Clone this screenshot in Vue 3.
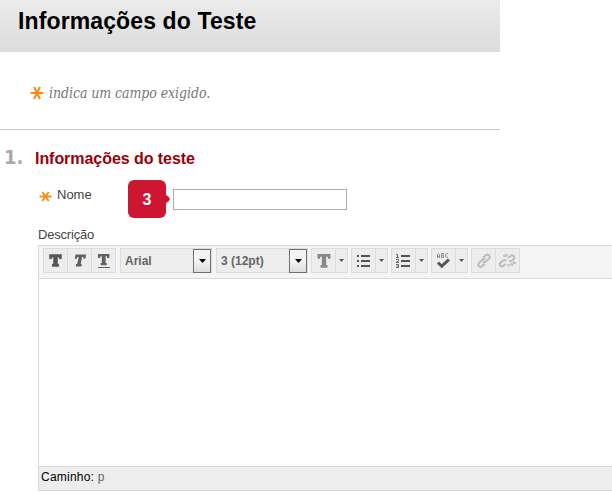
<script setup>
const styleButtons = ['bold', 'italic', 'underline']
const selects = [
  { label: 'Arial', width: 92 },
  { label: '3 (12pt)', width: 92 },
]
const menus = ['color', 'bullets', 'numbers', 'spell']
const slab = 'M0 0H12V4.2H9.6V2.4H8V9.6H9.2V12H2.8V9.6H4V2.4H2.4V4.2H0Z'
</script>

<template>
  <main class="page">
    <header class="title-bar"><h1>Informações do Teste</h1></header>

    <div class="required-note">
      <svg class="star" viewBox="0 0 14 14"><path d="M0.5 7H13.5M4 1L10 13M10 1L4 13" /></svg>
      <em>indica um campo exigido.</em>
    </div>

    <div class="section-heading">
      <span class="number">1.</span>
      <h2>Informações do teste</h2>
    </div>

    <div class="name-row">
      <svg class="star" viewBox="0 0 14 12"><path d="M0.5 6H13.5M3.5 1L10.5 11M10.5 1L3.5 11" /></svg>
      <label for="name">Nome</label>
      <div class="callout">3</div>
      <input id="name" type="text" />
    </div>

    <div class="description-label">Descrição</div>

    <section class="editor">
      <div class="toolbar">
        <div class="group">
          <button v-for="kind in styleButtons" :key="kind" type="button" class="cell">
            <svg viewBox="0 0 24 24" class="icon">
              <path v-if="kind === 'bold'" :d="slab" transform="translate(5.5 5.5)" fill="#555" stroke="#555" stroke-width=".5" />
              <path v-else-if="kind === 'italic'" :d="slab" transform="matrix(.88 0 -.2 1 7.6 5.5)" fill="#606060" />
              <g v-else fill="#606060">
                <path :d="slab" transform="translate(6 5) scale(.95 .93)" />
                <path d="M6 18H18V19H6Z" />
              </g>
            </svg>
          </button>
        </div>

        <div v-for="s in selects" :key="s.label" class="select" :style="{ width: s.width + 'px' }">
          <span>{{ s.label }}</span>
          <i class="drop"><svg viewBox="0 0 7 4"><path d="M0 0H7L3.5 4Z" /></svg></i>
        </div>

        <div v-for="kind in menus" :key="kind" class="group">
          <button type="button" class="cell">
            <svg viewBox="0 0 24 24" class="icon">
              <path v-if="kind === 'color'" :d="slab" transform="translate(5.5 5) scale(1.08 1.15)" fill="#888" />
              <g v-else-if="kind === 'bullets'" fill="#555">
                <path d="M5 6H7V8H5ZM5 11H7V13H5ZM5 16H7V18H5ZM9 6H18V8H9ZM9 11H18V13H9ZM9 16H18V18H9Z" />
              </g>
              <g v-else-if="kind === 'numbers'" fill="#555">
                <path d="M9 6H18V8H9ZM9 11H18V13H9ZM9 16H18V18H9Z" />
                <path d="M4 5.5H5.5V8.5M4 8.5H7M4 10.5H6.5V12L4 13.5H7M4 15.5H6.5V18.5H4M4.5 17H6" fill="none" stroke="#666" />
              </g>
              <g v-else>
                <path d="M5.5 9V5.5L6.5 4.5L7.5 5.5V9M5.5 7.5H7.5M9.5 4.5V8.5H11.5V7L10.5 6.5L11.5 6V4.5H9.5M16 5L15 4.5L13.5 5.5V7.5L15 8.5L16 8" fill="none" stroke="#777" stroke-width=".8" />
                <path d="M6 13.5L9.8 17.2L17 10.5" fill="none" stroke="#555" stroke-width="3" />
              </g>
            </svg>
          </button>
          <button type="button" class="cell arrow">
            <svg viewBox="0 0 5 3"><path d="M0 0H5L2.5 3Z" /></svg>
          </button>
        </div>

        <div class="group">
          <button type="button" class="cell">
            <svg viewBox="0 0 24 24" class="icon link">
              <path d="M11 9L14 6Q15.5 5 17 6.5Q18.5 8 17 9.7L14 12.5Q12.5 13.7 11 12.5M13 11Q11.5 9.8 10 11L7 14Q5.5 15.7 7 17.3Q8.5 18.5 10 17.3L12.7 14.7" />
            </svg>
          </button>
          <button type="button" class="cell">
            <svg viewBox="0 0 24 24" class="icon link">
              <path d="M10.5 11.5Q8.5 10.5 7 11.7L4.5 13.8Q3 15.2 4.3 16.7Q5.8 18 7.5 16.7L9.8 14.8M12 9L14.5 7Q16 5.7 17.6 7Q19 8.5 17.5 10.2L15.8 11.8Q14.5 12.6 13 11.8" />
              <path d="M7.5 6L9 8M10.5 5V7.5M14.5 14.5L17 16.5M16.5 13.5L20 14.2M12.5 15V17.5" stroke-width="1.3" />
            </svg>
          </button>
        </div>
      </div>
      <div class="content"></div>
      <footer class="path">Caminho: <span>p</span></footer>
    </section>
  </main>
</template>

<style>
body { background: #fff; }
</style>

<style scoped>
* { box-sizing: border-box; }
.page {
  width: 612px;
  height: 494px;
  overflow: hidden;
  font-family: "Liberation Sans", Arial, sans-serif;
  background: #fff;
}
.title-bar {
  width: 500px;
  height: 52px;
  padding: 7px 0 0 18px;
  background: linear-gradient(#ebebeb, #dcdcdc);
}
h1 { margin: 0; font-size: 23px; line-height: 28px; font-weight: 700; letter-spacing: .12px; color: #000; white-space: nowrap; }
.required-note {
  width: 500px;
  height: 78px;
  padding: 34px 0 0 30px;
  border-bottom: 1px solid #c6c6c6;
  display: flex;
  gap: 5px;
}
.star { display: block; flex: none; width: 14px; height: 14px; }
.star path { fill: none; stroke: #ff8a12; stroke-width: 2; }
em { margin-top: -3px; font: italic 14px/20px "DejaVu Serif Condensed", "DejaVu Serif", Georgia, serif; font-stretch: condensed; letter-spacing: -.08px; color: #777; white-space: nowrap; }
.section-heading { display: flex; height: 50px; padding: 15px 0 0 4px; }
.number { width: 31px; font: 700 20px/24px "DejaVu Sans Condensed", "DejaVu Sans", Verdana, sans-serif; font-stretch: condensed; color: #aaa; }
h2 { margin: 3px 0 0; font-size: 16px; line-height: 22px; letter-spacing: -.05px; color: #990009; white-space: nowrap; }
.name-row { display: flex; height: 46px; padding-left: 39px; align-items: flex-start; }
.name-row .star { width: 13px; height: 11px; margin-top: 11px; }
label { width: 71px; margin-left: 5px; font-size: 13px; line-height: 16px; margin-top: 7px; color: #444; }
.callout {
  position: relative;
  width: 38px;
  height: 38px;
  border-radius: 6px;
  background: #ce1531;
  color: #fff;
  font-size: 16px;
  font-weight: 700;
  line-height: 40px;
  text-align: center;
}
.callout::after {
  content: "";
  position: absolute;
  left: 37px;
  top: 14px;
  width: 5px;
  height: 10px;
  background: #ce1531;
  clip-path: polygon(0 0, 75% 30%, 100% 50%, 75% 70%, 0 100%);
}
input { width: 174px; height: 21px; margin: 9px 0 0 7px; padding: 0 4px; border: 1px solid #abadb3; background: #fff; }
.description-label { height: 19px; padding-left: 38px; font-size: 13px; line-height: 17px; letter-spacing: -.2px; color: #444; }
.editor { width: 574px; margin-left: 38px; border: 1px solid #d9d9d9; border-right: 0; }
.toolbar { display: flex; height: 33px; padding: 2px 0 0 4px; gap: 3px; background: #f5f5f5; border-bottom: 1px solid #d9d9d9; }
.group { display: flex; height: 25px; border: 1px solid #dcdcdc; background: #ededed; }
.group:first-child { margin-right: 1px; }
.cell { width: 23px; height: 23px; padding: 0; border: 0; background: transparent; display: flex; align-items: center; justify-content: center; }
.cell + .cell { width: 24px; border-left: 1px solid #dcdcdc; }
.cell + .cell.arrow { width: 12px; }
.arrow svg { width: 5px; height: 3px; fill: #555; }
.icon { width: 24px; height: 24px; flex: none; }
.link path { fill: none; stroke: #bdbdbd; stroke-width: 2; }
.select { display: flex; height: 25px; padding-left: 4px; border: 1px solid #dcdcdc; background: #ededed; justify-content: space-between; font-size: 12px; font-weight: 700; line-height: 24px; color: #666; }
.select:nth-child(2) { margin-right: 1px; }
.drop { display: flex; width: 18px; height: 24px; align-items: center; justify-content: center; border: 1px solid #707070; background: linear-gradient(#f4f4f4 50%, #dcdcdc); }
.drop svg { width: 7px; height: 4px; fill: #000; }
.content { height: 187px; background: #fff; }
.path { height: 24px; padding-left: 2px; border-top: 1px solid #d9d9d9; background: #ededed; font-size: 12px; line-height: 20px; letter-spacing: .22px; color: #000; }
.path span { color: #666; }
</style>
